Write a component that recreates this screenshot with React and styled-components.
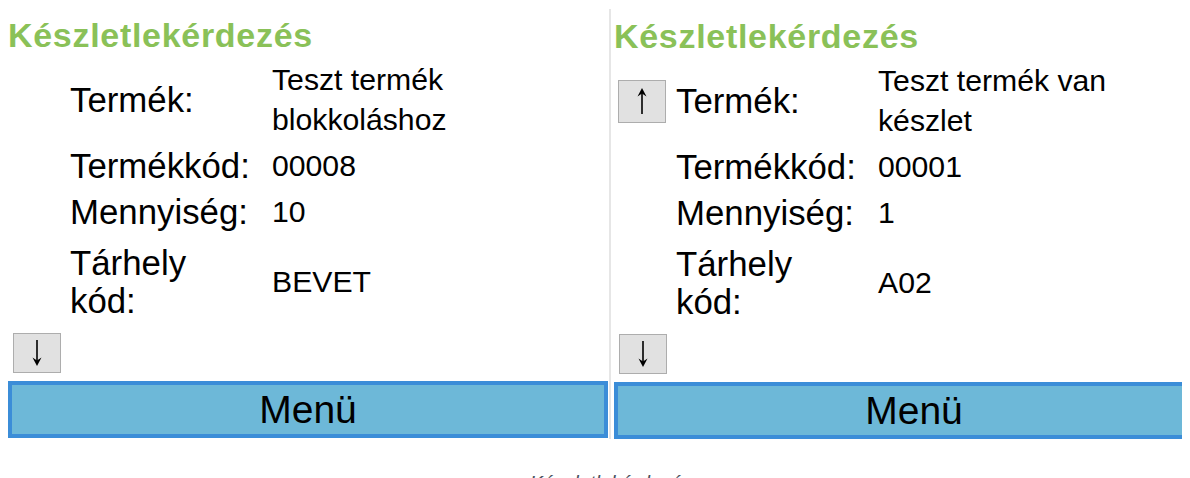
import React from "react";
import styled, { createGlobalStyle, css } from "styled-components";

const GlobalStyle = createGlobalStyle`
  html, body { padding: 0; overflow: hidden; background: #ffffff; }
  html { margin: 0; }
  body {
    margin: 8px;
    font-family: "Liberation Sans", Arial, "DejaVu Sans", sans-serif;
    color: #000000;
  }
`;

const Figure = styled.figure`
  margin: 0;
  width: 1206px;
`;

const Panels = styled.div`
  display: flex;
  align-items: flex-start;
`;

const Panel = styled.section`
  width: 600px;
  display: flex;
  flex-direction: column;
  ${(p) =>
    p.$divided &&
    css`
      margin-left: 1px;
      margin-top: 1px;
      border-left: 2px solid #e6e6e6;
      padding-left: 3px;
    `}
`;

const Title = styled.h2`
  margin: 8px 0 3px;
  font-size: 34px;
  line-height: 38px;
  font-weight: 700;
  letter-spacing: 0.7px;
  color: #8ac158;
  white-space: nowrap;
`;

const Grid = styled.div`
  display: grid;
  grid-template-columns: 62px 202px 270px;
`;

const Cell = styled.div`
  display: flex;
  align-items: center;
  padding: ${(p) => (p.$extra ? "9px 0 3px" : "3px 0")};
`;

const ArrowCell = styled(Cell)`
  padding-left: 4px;
`;

const Label = styled(Cell)`
  font-size: 34.8px;
  line-height: 38px;
  padding-right: 16px;
`;

const Value = styled(Cell)`
  font-size: 30.2px;
  line-height: 40px;
`;

const ArrowButton = styled.button`
  width: 48px;
  height: ${(p) => (p.$tall ? "43px" : "40px")};
  margin: 0;
  padding: 0;
  background: #e1e1e1;
  border: 1px solid #adadad;
  display: flex;
  align-items: center;
  justify-content: center;
`;

const DownRow = styled.div`
  display: flex;
  padding-left: 5px;
  margin-top: 10px;
`;

const MenuButton = styled.button`
  margin: 8px 0 0;
  width: 600px;
  height: 57px;
  padding: 0;
  background: #6db8d8;
  border: 4px solid #3b8dd8;
  font-family: "Liberation Sans", Arial, sans-serif;
  font-size: 39px;
  color: #000;
`;

const Caption = styled.figcaption`
  margin-top: 33px;
  text-align: center;
  font-size: 20px;
  font-style: italic;
  color: #4a5361;
`;

function Arrow({ up }) {
  return (
    <svg width="14" height="28" viewBox="0 0 14 28" aria-hidden="true">
      <g transform={up ? "rotate(180 7 14)" : undefined}>
        <line x1="7" y1="1" x2="7" y2="22" stroke="#000" strokeWidth="1.6" />
        <path d="M2.5 18.5 L7 27 L11.5 18.5 L7 21.5 Z" fill="#000" />
      </g>
    </svg>
  );
}

const panels = [
  {
    up: false,
    name: "Teszt termék blokkoláshoz",
    code: "00008",
    qty: "10",
    place: "BEVET",
  },
  {
    up: true,
    name: "Teszt termék van készlet",
    code: "00001",
    qty: "1",
    place: "A02",
  },
];

function StockPanel({ data, divided }) {
  const rows = [
    ["Termék:", data.name],
    ["Termékkód:", data.code],
    ["Mennyiség:", data.qty],
    ["Tárhely kód:", data.place],
  ];
  return (
    <Panel $divided={divided}>
      <Title>Készletlekérdezés</Title>
      <Grid>
        {rows.map(([label, value], i) => (
          <React.Fragment key={label}>
            <ArrowCell $extra={i === 3}>
              {i === 0 && data.up ? (
                <ArrowButton $tall aria-label="fel">
                  <Arrow up />
                </ArrowButton>
              ) : null}
            </ArrowCell>
            <Label $extra={i === 3}>{label}</Label>
            <Value $extra={i === 3}>{value}</Value>
          </React.Fragment>
        ))}
      </Grid>
      <DownRow>
        <ArrowButton aria-label="le">
          <Arrow />
        </ArrowButton>
      </DownRow>
      <MenuButton>Menü</MenuButton>
    </Panel>
  );
}

export default function App() {
  return (
    <>
      <GlobalStyle />
      <Figure>
        <Panels>
          {panels.map((d, i) => (
            <StockPanel key={i} data={d} divided={i > 0} />
          ))}
        </Panels>
        <Caption>Készletlekérdezés</Caption>
      </Figure>
    </>
  );
}
